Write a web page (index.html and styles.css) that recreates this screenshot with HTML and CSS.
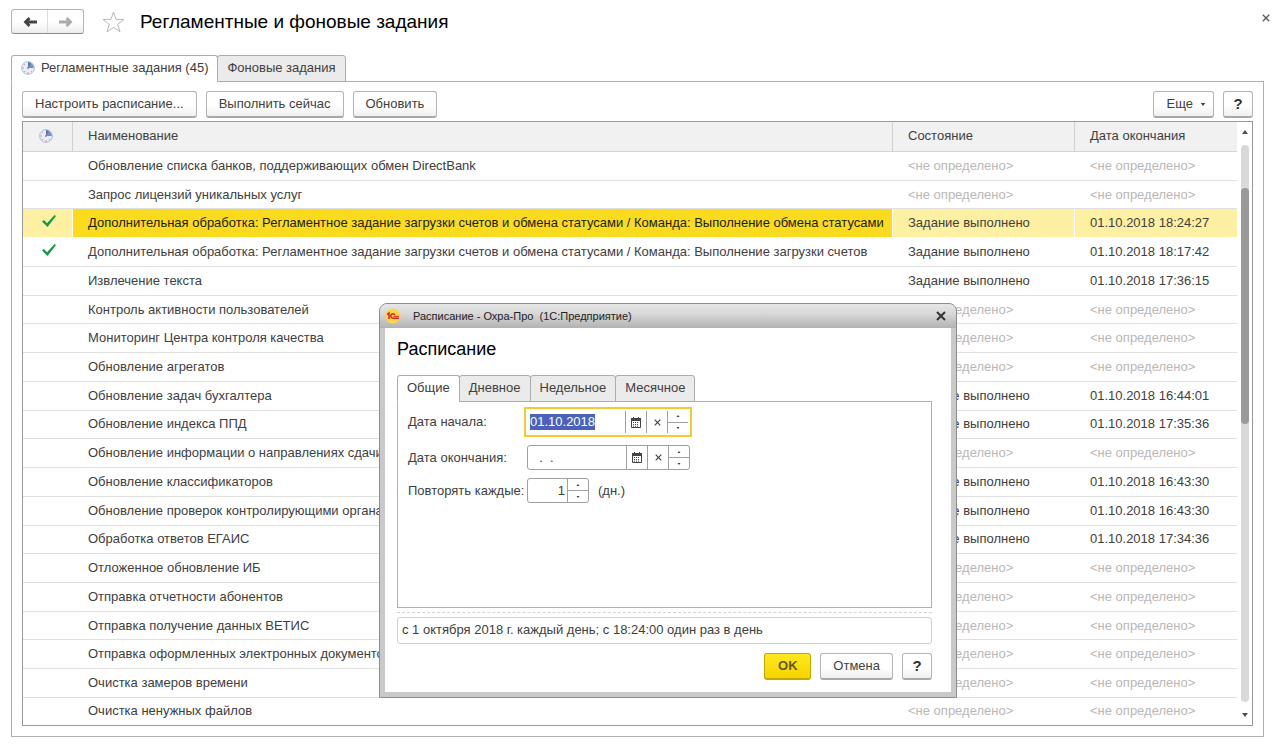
FILE: index.html
```html
<!DOCTYPE html>
<html lang="ru">
<head>
<meta charset="utf-8">
<title>Регламентные и фоновые задания</title>
<link rel="stylesheet" href="styles.css">
</head>
<body>
<svg class="defs" aria-hidden="true">
  <symbol id="clock" viewBox="0 0 14 14">
    <circle cx="7" cy="7" r="6.3" fill="#e9effa" stroke="#a9b8d8"/>
    <path d="M7 7V1.2A5.8 5.8 0 0 1 12.8 7Z" fill="#6f93c8"/>
    <path d="M7 7V1.2A5.8 5.8 0 0 1 10 2Z" fill="#4f74b4"/>
    <path d="M7 11v1.6M1.6 7H3M3.2 3.2l.9.9M3.2 10.8l.9-.9M10.8 10.8l-.9-.9" stroke="#c78fa8"/>
    <circle cx="7" cy="7" r="1" fill="#d0688a"/>
  </symbol>
  <symbol id="check" viewBox="0 0 14 12">
    <path d="M0 6.500 2 5l3 3.200L12.600 0 14 1 5.500 12Z" fill="#119a48"/>
  </symbol>
  <symbol id="calendar" viewBox="0 0 10 11">
    <path d="M.5 1.5h9v9h-9z" fill="#fff" stroke="#444"/>
    <path d="M0 1h10v3H0zM2 0h1v2H2zM7 0h1v2H7z" fill="#444"/>
    <path d="M2 5.5h6M2 7.5h6M2 9.2h6" stroke="#444" stroke-dasharray="1 1"/>
  </symbol>
  <symbol id="cross" viewBox="0 0 10 10">
    <path d="m1 1 8 8M9 1 1 9" fill="none" stroke="currentColor" stroke-width="2"/>
  </symbol>
  <symbol id="cross-thin" viewBox="0 0 10 10">
    <path d="m1 1 8 8M9 1 1 9" fill="none" stroke="currentColor" stroke-width="1.6"/>
  </symbol>
  <symbol id="up" viewBox="0 0 6 4"><path d="M0 4 3 0l3 4z" fill="currentColor"/></symbol>
  <symbol id="down" viewBox="0 0 6 4"><path d="M0 0h6L3 4z" fill="currentColor"/></symbol>
</svg>

<main class="page">
  <header class="header">
    <div class="history">
      <button type="button" aria-label="Назад"><svg width="14" height="10" viewBox="0 0 14 10"><path d="M14 5H2M6.500 1l-4 4 4 4" fill="none" stroke="#444" stroke-width="2.800"/></svg></button>
      <button type="button" aria-label="Вперед"><svg width="14" height="10" viewBox="0 0 14 10"><path d="M0 5h12M7.500 1l4 4-4 4" fill="none" stroke="#aaa" stroke-width="2.800"/></svg></button>
    </div>
    <button type="button" class="icon-button" aria-label="В избранное"><svg width="23" height="22" viewBox="0 0 23 22"><path d="m11.5 1 2.6 7.4 7.9.1-6.3 4.8 2.3 7.6-6.5-4.5L5 20.9l2.3-7.6L1 8.500l7.900-.1z" fill="#fff" stroke="#b8b8b8"/></svg></button>
    <h1>Регламентные и фоновые задания</h1>
    <button type="button" class="icon-button close" aria-label="Закрыть"><svg width="8" height="8"><use href="#cross-thin"/></svg></button>
  </header>

  <div class="tabs" role="tablist">
    <button type="button" class="tab active" role="tab" aria-selected="true"><svg width="14" height="14"><use href="#clock"/></svg>Регламентные задания (45)</button>
    <button type="button" class="tab" role="tab">Фоновые задания</button>
  </div>

  <section class="panel">
    <div class="toolbar">
      <button type="button" class="button">Настроить расписание...</button>
      <button type="button" class="button">Выполнить сейчас</button>
      <button type="button" class="button">Обновить</button>
      <button type="button" class="button more">Еще <svg width="6" height="3"><use href="#down"/></svg></button>
      <button type="button" class="button help">?</button>
    </div>
    <div class="list">
      <table class="jobs">
        <colgroup><col class="col-icon"><col><col class="col-state"><col class="col-date"></colgroup>
        <thead><tr><th><svg width="14" height="14"><use href="#clock"/></svg></th><th>Наименование</th><th>Состояние</th><th>Дата окончания</th></tr></thead>
        <tbody>
          <tr class="idle"><td></td><td>Обновление списка банков, поддерживающих обмен DirectBank</td><td>&lt;не определено&gt;</td><td>&lt;не определено&gt;</td></tr>
          <tr class="idle"><td></td><td>Запрос лицензий уникальных услуг</td><td>&lt;не определено&gt;</td><td>&lt;не определено&gt;</td></tr>
          <tr class="selected"><td><svg width="14" height="12"><use href="#check"/></svg></td><td>Дополнительная обработка: Регламентное задание загрузки счетов и обмена статусами / Команда: Выполнение обмена статусами</td><td>Задание выполнено</td><td>01.10.2018 18:24:27</td></tr>
          <tr><td><svg width="14" height="12"><use href="#check"/></svg></td><td>Дополнительная обработка: Регламентное задание загрузки счетов и обмена статусами / Команда: Выполнение загрузки счетов</td><td>Задание выполнено</td><td>01.10.2018 18:17:42</td></tr>
          <tr><td></td><td>Извлечение текста</td><td>Задание выполнено</td><td>01.10.2018 17:36:15</td></tr>
          <tr class="idle"><td></td><td>Контроль активности пользователей</td><td>&lt;не определено&gt;</td><td>&lt;не определено&gt;</td></tr>
          <tr class="idle"><td></td><td>Мониторинг Центра контроля качества</td><td>&lt;не определено&gt;</td><td>&lt;не определено&gt;</td></tr>
          <tr class="idle"><td></td><td>Обновление агрегатов</td><td>&lt;не определено&gt;</td><td>&lt;не определено&gt;</td></tr>
          <tr><td></td><td>Обновление задач бухгалтера</td><td>Задание выполнено</td><td>01.10.2018 16:44:01</td></tr>
          <tr><td></td><td>Обновление индекса ППД</td><td>Задание выполнено</td><td>01.10.2018 17:35:36</td></tr>
          <tr class="idle"><td></td><td>Обновление информации о направлениях сдачи</td><td>&lt;не определено&gt;</td><td>&lt;не определено&gt;</td></tr>
          <tr><td></td><td>Обновление классификаторов</td><td>Задание выполнено</td><td>01.10.2018 16:43:30</td></tr>
          <tr><td></td><td>Обновление проверок контролирующими органами</td><td>Задание выполнено</td><td>01.10.2018 16:43:30</td></tr>
          <tr><td></td><td>Обработка ответов ЕГАИС</td><td>Задание выполнено</td><td>01.10.2018 17:34:36</td></tr>
          <tr class="idle"><td></td><td>Отложенное обновление ИБ</td><td>&lt;не определено&gt;</td><td>&lt;не определено&gt;</td></tr>
          <tr class="idle"><td></td><td>Отправка отчетности абонентов</td><td>&lt;не определено&gt;</td><td>&lt;не определено&gt;</td></tr>
          <tr class="idle"><td></td><td>Отправка получение данных ВЕТИС</td><td>&lt;не определено&gt;</td><td>&lt;не определено&gt;</td></tr>
          <tr class="idle"><td></td><td>Отправка оформленных электронных документов</td><td>&lt;не определено&gt;</td><td>&lt;не определено&gt;</td></tr>
          <tr class="idle"><td></td><td>Очистка замеров времени</td><td>&lt;не определено&gt;</td><td>&lt;не определено&gt;</td></tr>
          <tr class="idle"><td></td><td>Очистка ненужных файлов</td><td>&lt;не определено&gt;</td><td>&lt;не определено&gt;</td></tr>
        </tbody>
      </table>
      <div class="scrollbar">
        <svg width="6" height="4"><use href="#up"/></svg>
        <div class="track"><div class="thumb"></div></div>
        <svg width="6" height="4"><use href="#down"/></svg>
      </div>
    </div>
  </section>
</main>

<section class="dialog" role="dialog" aria-labelledby="dialog-title">
  <div class="titlebar">
    <svg width="16" height="16" viewBox="0 0 16 16"><circle cx="8" cy="8" r="7.500" fill="#fbd84a"/><path d="M2 6.500 4 5v6M10 6.800A2.300 2.300 0 1 0 8.500 10.300H14" fill="none" stroke="#d8261c" stroke-width="1.500"/><path d="M8.500 8.300H14" stroke="#d8261c"/></svg>
    <span>Расписание - Охра-Про&nbsp; (1С:Предприятие)</span>
    <button type="button" class="icon-button close" aria-label="Закрыть окно"><svg width="10" height="10"><use href="#cross"/></svg></button>
  </div>
  <form class="dialog-body">
    <h2 id="dialog-title">Расписание</h2>
    <div class="tabs" role="tablist">
      <button type="button" class="tab active" role="tab" aria-selected="true">Общие</button>
      <button type="button" class="tab" role="tab">Дневное</button>
      <button type="button" class="tab" role="tab">Недельное</button>
      <button type="button" class="tab" role="tab">Месячное</button>
    </div>
    <div class="fields">
      <label for="start">Дата начала:</label>
      <div class="focus-ring">
        <div class="control">
          <input type="text" id="start" value="01.10.2018">
          <button type="button" aria-label="Календарь"><svg width="10" height="11"><use href="#calendar"/></svg></button>
          <button type="button" aria-label="Очистить"><svg width="7" height="7"><use href="#cross-thin"/></svg></button>
          <div class="spin"><button type="button" aria-label="Больше"><svg width="4" height="2"><use href="#up"/></svg></button><button type="button" aria-label="Меньше"><svg width="4" height="2"><use href="#down"/></svg></button></div>
        </div>
      </div>
      <label for="end">Дата окончания:</label>
      <div class="control boxed">
        <input type="text" id="end" value="  .  .">
        <button type="button" aria-label="Календарь"><svg width="10" height="11"><use href="#calendar"/></svg></button>
        <button type="button" aria-label="Очистить"><svg width="7" height="7"><use href="#cross-thin"/></svg></button>
        <div class="spin"><button type="button" aria-label="Больше"><svg width="4" height="2"><use href="#up"/></svg></button><button type="button" aria-label="Меньше"><svg width="4" height="2"><use href="#down"/></svg></button></div>
      </div>
      <label for="repeat">Повторять каждые:</label>
      <div class="repeat">
        <div class="control boxed short">
          <input type="text" id="repeat" value="1">
          <div class="spin"><button type="button" aria-label="Больше"><svg width="4" height="2"><use href="#up"/></svg></button><button type="button" aria-label="Меньше"><svg width="4" height="2"><use href="#down"/></svg></button></div>
        </div>
        <span>(дн.)</span>
      </div>
    </div>
    <hr>
    <input type="text" class="summary" aria-label="Описание расписания" readonly value="с 1 октября 2018 г. каждый день; с 18:24:00 один раз в день">
    <div class="actions">
      <button type="button" class="button primary">OK</button>
      <button type="button" class="button">Отмена</button>
      <button type="button" class="button help">?</button>
    </div>
  </form>
</section>
<script src="main.js"></script>
</body>
</html>
```
FILE: main.js
```js
const start = document.getElementById('start');
start.focus();
start.select();
```
FILE: styles.css
```css
* { box-sizing: border-box; }
body {
  margin: 0;
  height: 100vh;
  position: relative;
  background: #fff;
  color: #404040;
  font: 13px/16px "Liberation Sans", Arial, sans-serif;
}
button, input { font: inherit; color: inherit; margin: 0; }
button { padding: 0; border: 0; background: none; white-space: nowrap; }
svg { display: block; flex: none; }
h1, h2 { margin: 0; font-weight: normal; font-size: 18px; line-height: 22px; color: #000; }
h1 { font-size: 19px; }
.defs { position: absolute; width: 0; height: 0; }

.page {
  display: flex;
  flex-direction: column;
  height: 100%;
  min-height: 640px;
  padding: 9px 16px 8px 11px;
}
.header { display: flex; align-items: center; height: 25px; margin-bottom: 21px; }
.header h1 { margin-left: 15px; flex: 1; }
.header .close { margin: -7px -6px 0 0; color: #555; }
.history {
  display: flex;
  width: 73px;
  height: 25px;
  margin-right: 18px;
  border: 1px solid #b4b4b4;
  border-bottom-color: #8c8c8c;
  border-radius: 3px;
  background: linear-gradient(#fff 50%, #ededed);
}
.history button { flex: 1; display: flex; align-items: center; justify-content: center; }
.history button + button { border-left: 1px solid #dcdcdc; }

.tabs { display: flex; position: relative; }
.tab {
  display: flex;
  align-items: center;
  gap: 6px;
  height: 27px;
  padding: 0 9px 1px;
  border: 1px solid #ababab;
  border-radius: 3px 3px 0 0;
  margin-bottom: -1px;
  background: #ebebeb;
}
.tab + .tab { margin-left: -1px; }
.tab.active { background: #fff; border-bottom-color: #fff; }

.panel {
  flex: 1;
  min-height: 0;
  display: flex;
  flex-direction: column;
  gap: 3px;
  padding: 9px 10px 10px;
  border: 1px solid #b0b0b0;
}
.toolbar { display: flex; gap: 9px; }
.button {
  height: 27px;
  padding: 0 12px;
  border: 1px solid #b4b4b4;
  border-bottom: 2px solid #a8a8a8;
  border-radius: 3px;
  background: linear-gradient(#fff 55%, #f0f0f0);
}
.more { display: flex; align-items: center; gap: 7px; padding: 0 7px 0 13px; margin-left: auto; }
.help { width: 30px; padding: 0; font-weight: bold; font-size: 15px; color: #303030; }

.list {
  flex: 1;
  min-height: 0;
  display: flex;
  border: 1px solid #989898;
}
.jobs {
  flex: 1;
  width: 100%;
  height: 100%;
  border-collapse: separate;
  border-spacing: 0;
  table-layout: fixed;
  white-space: nowrap;
}
.col-icon { width: 50px; }
.col-state { width: 182px; }
.col-date { width: 162px; }
.jobs th {
  height: 30px;
  padding: 0 15px 2px;
  border-bottom: 1px solid #d4d4d4;
  background: #f1f1f1;
  font-weight: normal;
  text-align: left;
}
.jobs th:not(:last-child) { border-right: 1px solid #d0d0d0; }
.jobs td { padding: 0 15px; border-bottom: 1px solid #e0e0e0; overflow: hidden; }
.jobs th:first-child { padding: 0 16px 2px; }
.jobs td:first-child { padding: 0 0 4px 19px; }
.jobs tr:last-child td { border-bottom: 0; }
.idle td:nth-child(n+3) { color: #b8b8b8; }
.jobs .selected td { background: #fdf0a2; border-color: #fff; }
.jobs .selected td:not(:last-child) { border-right: 1px solid #fff; }
.jobs .selected td:nth-child(2) { background: #fbdb1e; color: #201c00; }

.scrollbar {
  flex: none;
  width: 15px;
  display: flex;
  flex-direction: column;
  align-items: center;
  gap: 11px;
  padding: 8px 0;
  color: #505050;
}
.track { flex: 1; width: 8px; padding-top: 43px; border-radius: 4px; background: #d9d9d9; }
.thumb { height: 46%; border-radius: 4px; background: #999; }

.dialog {
  position: absolute;
  left: 379px;
  top: 303px;
  width: 578px;
  border: 1px solid #8c8c8c;
  border-radius: 8px 8px 0 0;
  background: #c9c9c9;
  padding: 0 5px 5px;
}
.titlebar {
  display: flex;
  align-items: center;
  gap: 12px;
  height: 24px;
  margin: 0 -5px;
  padding: 0 10px 0 5px;
  border-radius: 7px 7px 0 0;
  background: linear-gradient(#e6e6e6, #d8d8d8 40%, #b2b2b2);
  font-size: 11px;
  color: #222;
}
.titlebar .close { margin-left: auto; color: #333; }
.dialog-body { background: #fff; padding: 10px 19px 12px 12px; }
.dialog h2 { margin-bottom: 15px; }
.fields {
  display: grid;
  grid-template-columns: 116px 1fr;
  align-content: start;
  align-items: center;
  row-gap: 8px;
  height: 207px;
  padding: 5px 10px;
  border: 1px solid #b0b0b0;
}
.fields label { white-space: nowrap; }
.focus-ring { width: 168px; height: 30px; padding: 2px 2px 2px 4px; border: 2px solid #f5c933; }
.fields > .control, .repeat { margin-left: 3px; }
.control { display: flex; height: 22px; }
.boxed { width: 163px; height: 25px; border: 1px solid #a0a0a0; border-radius: 3px; }
.short { width: 62px; }
.control input { flex: 1; width: 0; padding: 0; border: 0; outline: 0; background: none; }
.boxed input { padding-left: 4px; white-space: pre; }
.short input { text-align: right; padding-right: 2px; }
.control > button, .spin { width: 21px; border-left: 1px solid #a0a0a0; }
.control button { display: grid; place-items: center; }
.spin { display: flex; flex-direction: column; }
.spin button { flex: 1; width: 100%; }
.spin button + button { border-top: 1px solid #a0a0a0; }
input::selection { background: #4a62bd; color: #fff; }
.repeat { display: flex; align-items: center; gap: 9px; }
hr { margin: 4px 0; border: 0; border-top: 1px dashed #d4d4d4; }
.summary { display: block; width: 100%; height: 27px; padding: 0 4px 2px; border: 1px solid #d0d0d0; border-radius: 3px; outline: 0; }
.actions { display: flex; justify-content: flex-end; gap: 9px; margin-top: 9px; }
.primary { width: 47px; border-color: #c4a800; background: linear-gradient(#ffe81e, #f5d400); font-weight: bold; color: #665a10; }
```
